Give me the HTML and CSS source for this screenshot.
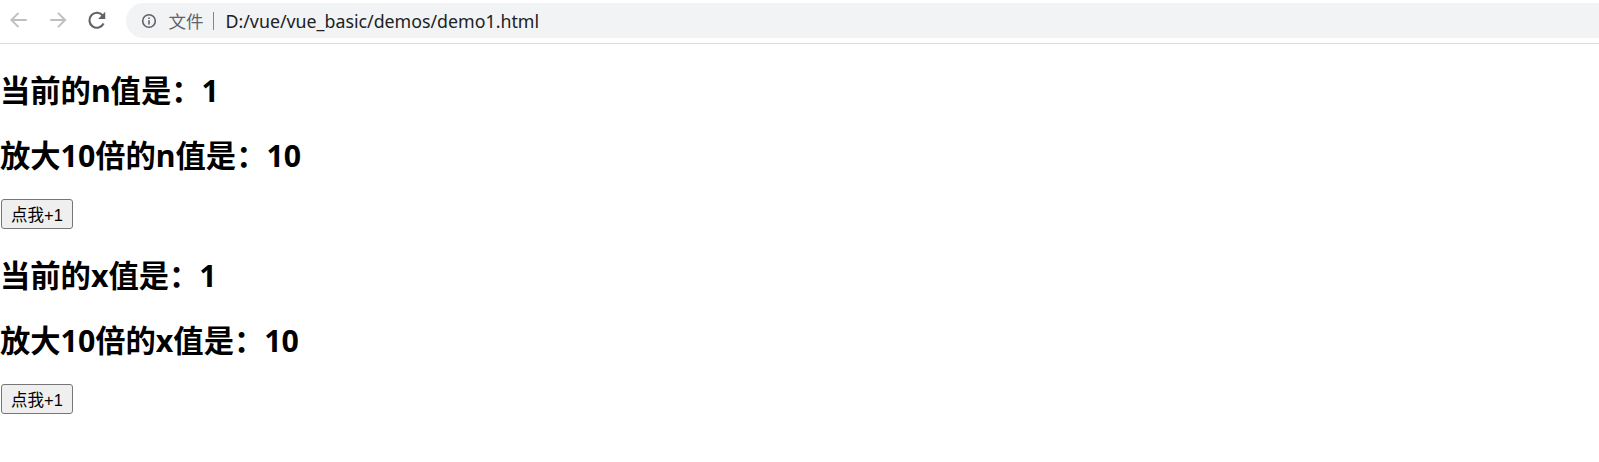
FILE: index.html
```html
<!DOCTYPE html>
<html lang="zh-CN">
<head>
    <meta charset="UTF-8">
    <title>demo1</title>
    <link rel="stylesheet" href="styles.css">
</head>
<body>
    <div class="toolbar">
        <svg class="nav-icon" viewBox="0 0 20 20" width="22" height="22">
            <path d="M18 10H4.5M10.5 3.5L4 10l6.5 6.5" fill="none" stroke="#bdc0c3" stroke-width="1.8"/>
        </svg>
        <svg class="nav-icon" viewBox="0 0 20 20" width="22" height="22">
            <path d="M3 10h13.5M10 3.5l6.5 6.5-6.5 6.5" fill="none" stroke="#bdc0c3" stroke-width="1.8"/>
        </svg>
        <svg class="nav-icon" viewBox="0 0 20 20" width="22" height="22">
            <path d="M16 13.2A6.8 6.8 0 1 1 15.4 6.2" fill="none" stroke="#5f6368" stroke-width="1.9"/>
            <path d="M17.5 2.5v6.5H11z" fill="#5f6368"/>
        </svg>
        <div class="omnibox">
            <svg class="info-icon" viewBox="0 0 16 16" width="16" height="16">
                <circle cx="8" cy="8" r="6.3" fill="none" stroke="#5f6368" stroke-width="1.6"/>
                <path d="M8 7.2v4.3M8 4.5v1.5" stroke="#5f6368" stroke-width="1.6"/>
            </svg>
            <span class="scheme">文件</span>
            <span class="divider"></span>
            <span class="url">D:/vue/vue_basic/demos/demo1.html</span>
        </div>
    </div>

    <div class="page">
        <h2>当前的n值是：1</h2>
        <h2>放大10倍的n值是：10</h2>
        <button>点我+1</button>
        <h2>当前的x值是：1</h2>
        <h2>放大10倍的x值是：10</h2>
        <button>点我+1</button>
    </div>
</body>
</html>
```

FILE: styles.css
```css
body {
    margin: 0;
    background-color: #fff;
    font-family: "Noto Sans", "Noto Sans CJK SC", sans-serif;
    overflow: hidden;
}

.toolbar {
    display: flex;
    align-items: flex-start;
    gap: 17.5px;
    height: 40px;
    padding: 3px 0 0 7px;
    border-bottom: 1px solid #dadce0;
}

.nav-icon {
    flex: none;
    margin-top: 6px;
}

.omnibox {
    flex: 1;
    display: flex;
    align-items: center;
    height: 35px;
    padding-left: 15px;
    background-color: #f1f3f4;
    border-radius: 18px 0 0 18px;
}

.info-icon {
    flex: none;
    margin-right: 12px;
}

.scheme {
    font-size: 17.5px;
    color: #5f6368;
}

.divider {
    width: 1px;
    height: 18px;
    margin: 0 12px 0 9px;
    background-color: #80868b;
}

.url {
    font-size: 17.8px;
    color: #202124;
}

h2 {
    font-size: 30.3px;
    font-weight: bold;
    line-height: 35px;
    margin: 29px 0 26px;
    color: #000;
}

h2 + h2 {
    margin-top: 30px;
}

button {
    display: block;
    width: 72px;
    height: 30px;
    margin-left: 1px;
    padding: 0;
    font-family: "Liberation Sans", "Noto Sans CJK SC", sans-serif;
    font-size: 16.5px;
    color: #000;
    background-color: #efefef;
    border: 1px solid #767676;
    border-radius: 3px;
}
```
